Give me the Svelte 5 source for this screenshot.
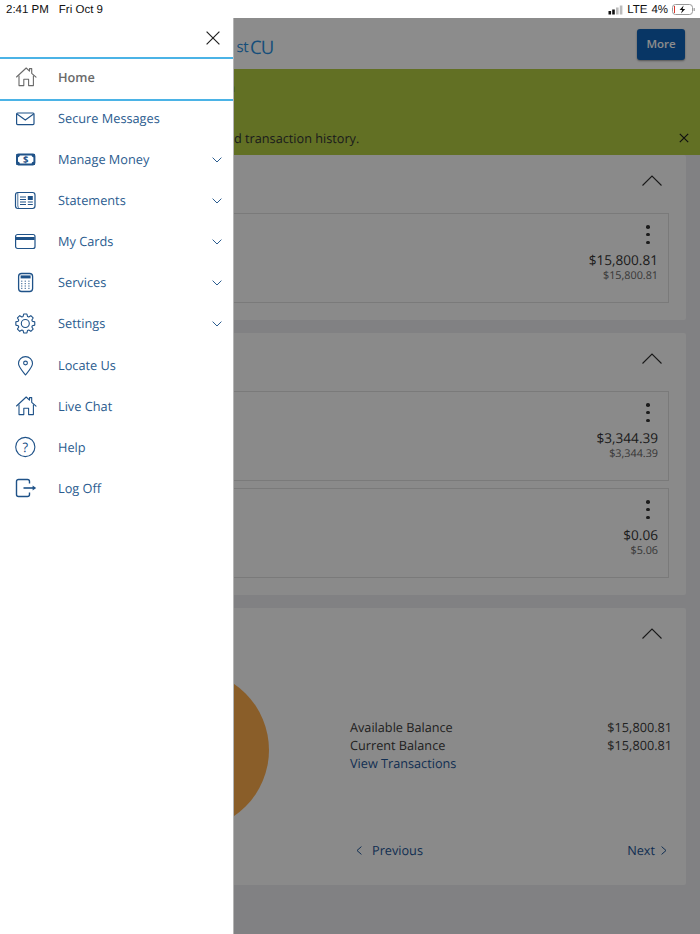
<script>
const menu = [
  { name: 'Secure Messages', icon: 'mail' },
  { name: 'Manage Money', icon: 'money', more: true },
  { name: 'Statements', icon: 'statement', more: true },
  { name: 'My Cards', icon: 'card', more: true },
  { name: 'Services', icon: 'calc', more: true },
  { name: 'Settings', icon: 'gear', more: true },
  { name: 'Locate Us', icon: 'pin' },
  { name: 'Live Chat', icon: 'home' },
  { name: 'Help', icon: 'help' },
  { name: 'Log Off', icon: 'logoff' }
]

const groups = [
  [{ main: '$15,800.81', sub: '$15,800.81' }],
  [{ main: '$3,344.39', sub: '$3,344.39' }, { main: '$0.06', sub: '$5.06' }]
]

// gear outline, 8 teeth
function gearPath() {
  let pts = []
  for (let i = 0; i < 8; i++) {
    let a = (i * Math.PI) / 4
    for (let [r, d] of [[7.4, -0.3], [9.6, -0.17], [9.6, 0.17], [7.4, 0.3]]) {
      pts.push((12.3 + r * Math.cos(a + d)).toFixed(2) + ' ' + (12.5 + r * Math.sin(a + d)).toFixed(2))
    }
  }
  return 'M' + pts.join('L') + 'Z'
}
const gear = gearPath()
const calcDots = [0, 1, 2, 3, 4, 5, 6, 7, 8, 9, 10, 11]
</script>

{#snippet icon(name)}
  <svg class="icon" viewBox="0 0 24 24" width="24" height="24" fill="none" stroke="currentColor" stroke-width="1.1">
    {#if name === 'home'}
      <path d="M3.5 12 13.2 3l3.3 3.1V3.6h2.2v4.7l4.3 3.9" stroke-linejoin="round" stroke-linecap="round" />
      <path d="M6 10.4V20.6h4.8v-6.3h4.8v6.3h4.8V10.4" stroke-linejoin="round" />
    {:else if name === 'mail'}
      <rect x="3.6" y="7" width="17.4" height="11.6" rx="1" stroke-width="1.2" />
      <path d="m4 8 8.3 6L20.6 8" stroke-width="1.1" />
    {:else if name === 'money'}
      <rect x="4" y="7.6" width="17.4" height="9.8" rx="1.4" stroke-width="2" />
      <path d="M3.4 7h3.4v1.6a1.8 1.8 0 0 1-3.4.6ZM22 7h-3.4v1.6a1.8 1.8 0 0 0 3.4.6ZM3.4 18h3.4v-1.6a1.8 1.8 0 0 0-3.4-.6ZM22 18h-3.4v-1.6a1.8 1.8 0 0 1 3.4-.6Z" fill="currentColor" stroke="none" />
      <text class="dollar" x="12.7" y="16.2" text-anchor="middle">$</text>
    {:else if name === 'statement'}
      <rect x="2.5" y="4.5" width="19.5" height="16" rx="2.4" stroke-width="1.2" />
      <path d="M4.8 4.6v13.6c0 .8.5 1.3 1.2 1.3" stroke-width="0.8" />
      <path d="M7 9h6M7 11.5h6M7 14h6M7 16.5h6M14.8 14h5M14.8 16.5h5" stroke-width="1.2" />
      <rect x="14.8" y="8" width="5" height="4" fill="currentColor" stroke="none" />
    {:else if name === 'card'}
      <rect x="2.6" y="5.5" width="19.4" height="14" rx="2" stroke-width="1.2" />
      <rect x="3" y="8" width="18.6" height="3" fill="currentColor" stroke="none" />
    {:else if name === 'calc'}
      <rect x="5.6" y="3.5" width="14" height="18" rx="3" stroke-width="1.3" />
      <rect x="7.6" y="5.4" width="10" height="3" fill="currentColor" stroke="none" />
      {#each calcDots as d}
        <rect x={8 + (d % 3) * 3.6} y={10.6 + Math.floor(d / 3) * 2.4} width="1.4" height="1.2" fill="currentColor" stroke="none" opacity="0.7" />
      {/each}
    {:else if name === 'gear'}
      <path d={gear} stroke-linejoin="round" />
      <circle cx="12.3" cy="12.5" r="4" />
    {:else if name === 'pin'}
      <path d="M12.5 22C9 17.6 5.5 14 5.5 10.6a7 7 0 0 1 14 0c0 3.4-3.5 7-7 11.4Z" stroke-linejoin="round" />
      <circle cx="12.5" cy="10" r="1.9" />
    {:else if name === 'help'}
      <circle cx="12.3" cy="12" r="9.6" stroke-width="1.1" />
      <text class="quest" x="12.3" y="16.6" text-anchor="middle">?</text>
    {:else if name === 'logoff'}
      <path d="M16.5 7.5v-2a2 2 0 0 0-2-2h-9a2 2 0 0 0-2 2v13a2 2 0 0 0 2 2h9a2 2 0 0 0 2-2v-2" stroke-width="1.4" />
      <path d="M10.5 12H20" stroke-width="1.6" />
      <path d="m19.6 9.6 3.6 2.4-3.6 2.4Z" fill="currentColor" stroke="none" />
    {/if}
  </svg>
{/snippet}

{#snippet caretUp()}
  <svg class="caretUp" viewBox="0 0 20 11" width="20" height="11" fill="none" stroke="#2e2e2e" stroke-width="1.1"><path d="M.5 10.5 10 1l9.5 9.5" /></svg>
{/snippet}

<div class="app">
  <div class="status">
    <span>2:41 PM</span>
    <span class="date">Fri Oct 9</span>
    <span class="statusRight">
      <svg class="signal" width="16" height="10" viewBox="0 0 16 10">
        <rect x="0.5" y="6" width="2.6" height="3.5" fill="#111" />
        <rect x="4.2" y="4.5" width="2.6" height="5" fill="#111" />
        <rect x="8" y="2.5" width="2.6" height="7" fill="#bbb" />
        <rect x="11.8" y="0.5" width="2.6" height="9" fill="#bbb" />
      </svg>
      <span>LTE</span>
      <span class="pct">4%</span>
      <svg width="23" height="11" viewBox="0 0 23 11">
        <rect x="0.5" y="0.5" width="20" height="10" rx="3" fill="none" stroke="#999" />
        <rect x="2" y="2" width="1" height="7" fill="#d9352b" />
        <path d="M11.6 1.6 7.6 6h2.6L9 9.6 13.2 5h-2.6Z" fill="#111" />
        <rect x="21.6" y="4" width="1.2" height="3" fill="#999" />
      </svg>
    </span>
  </div>

  <div class="page">
    <header class="top">
      <span class="logo">1<small>st</small>CU</span>
      <button class="moreBtn" type="button">More</button>
    </header>

    <div class="banner">
      <div class="bannerHidden">n</div>
      <div class="bannerLine">
        <span>d transaction history.</span>
        <svg width="10" height="10" viewBox="0 0 10 10" fill="none" stroke="#1d1d1d" stroke-width="1.2"><path d="m.8.8 8.4 8.4M9.2.8.8 9.2" /></svg>
      </div>
    </div>

    <div class="cards">
      {#each groups as group}
        <section class="card">
          <div class="cardHead">{@render caretUp()}</div>
          <div class="boxes">
            {#each group as acct}
              <div class="box">
                <span class="kebab"><i></i><i></i><i></i></span>
                <div class="amount">{acct.main}</div>
                <div class="subAmount">{acct.sub}</div>
              </div>
            {/each}
          </div>
        </section>
      {/each}

      <section class="card">
        <div class="cardHead">{@render caretUp()}</div>
        <div class="detailBody">
          <div class="chart"></div>
          <div class="details">
            <div class="balRow"><span>Available Balance</span><span>$15,800.81</span></div>
            <div class="balRow"><span>Current Balance</span><span>$15,800.81</span></div>
            <div class="link">View Transactions</div>
            <div class="pager">
              <span class="link pagerItem prev">
                <svg width="6" height="9" viewBox="0 0 6 9" fill="none" stroke="currentColor" stroke-width="1"><path d="M5.4.6 1 4.5l4.4 3.9" /></svg>
                Previous
              </span>
              <span class="link pagerItem">
                Next
                <svg width="6" height="9" viewBox="0 0 6 9" fill="none" stroke="currentColor" stroke-width="1"><path d="M.6.6 5 4.5.6 8.4" /></svg>
              </span>
            </div>
          </div>
        </div>
      </section>
    </div>
  </div>

  <div class="scrim"></div>

  <nav class="drawer">
    <div class="drawerTop">
      <svg width="14" height="14" viewBox="0 0 14 14" fill="none" stroke="#222" stroke-width="1.2"><path d="m.6.6 12.8 12.8M13.4.6.6 13.4" /></svg>
    </div>
    <div class="homeRow">
      {@render icon('home')}
      <span>Home</span>
    </div>
    {#each menu as item}
      <div class="row">
        {@render icon(item.icon)}
        <span>{item.name}</span>
        {#if item.more}
          <svg class="caret" width="10" height="6" viewBox="0 0 10 6" fill="none" stroke="currentColor" stroke-width="1"><path d="m.6.6 4.4 4.4L9.4.6" /></svg>
        {/if}
      </div>
    {/each}
  </nav>
</div>

<style>
  :global(body) {
    margin: 0;
    background: #fff;
  }

  .app {
    position: relative;
    height: 934px;
    overflow: hidden;
    font-family: "Open Sans", "Noto Sans", sans-serif;
    text-rendering: geometricPrecision;
  }

  .status {
    height: 18px;
    box-sizing: border-box;
    display: flex;
    align-items: center;
    padding: 1px 5px 0 6px;
    font-family: "Liberation Sans", sans-serif;
    font-size: 11.5px;
    color: #111;
    background: #fff;
  }

  .date {
    margin-left: 10px;
  }

  .statusRight {
    margin-left: auto;
    display: flex;
    align-items: center;
    gap: 4px;
  }

  .pct {
    margin-left: 0;
  }

  .signal {
    margin-right: -1px;
  }

  .page {
    height: 916px;
    background: #ebebee;
  }

  .top {
    height: 51px;
    box-sizing: border-box;
    display: flex;
    justify-content: space-between;
    align-items: flex-start;
    padding: 11px 15px 0 227px;
    background: #fff;
  }

  .logo {
    margin-top: 5px;
    font-size: 18.5px;
    font-weight: 500;
    line-height: 28px;
    letter-spacing: -1px;
    color: #2a8fe0;
  }

  .logo small {
    position: relative;
    top: -2px;
    font-size: 15px;
    letter-spacing: -0.5px;
    margin-right: 2px;
  }

  .moreBtn {
    width: 48px;
    height: 31px;
    border: 0;
    padding: 0 0 2px;
    border-radius: 3px;
    background: #0f63b8;
    box-shadow: 0 1px 2px rgba(0, 0, 0, 0.4);
    color: #fff;
    font-family: inherit;
    font-size: 11.5px;
    font-weight: 600;
  }

  .banner {
    height: 86px;
    box-sizing: border-box;
    background: #b2cc43;
    color: #333;
    font-size: 12.7px;
  }

  .bannerHidden {
    width: 235px;
    height: 59px;
    box-sizing: border-box;
    padding-top: 8px;
    text-align: right;
    line-height: 20px;
  }

  .bannerLine {
    display: flex;
    align-items: center;
    justify-content: space-between;
    padding: 0 11px 0 234px;
    line-height: 20px;
  }

  .cards {
    display: flex;
    flex-direction: column;
    gap: 13px;
    padding: 0 14px;
  }

  .card {
    background: #fbfbfb;
    border-radius: 2px;
    padding: 0 17px 17px 0;
  }

  .cardHead {
    height: 58px;
    display: flex;
    justify-content: flex-end;
  }

  .caretUp {
    margin: 20px 7px 0 0;
  }

  .boxes {
    display: flex;
    flex-direction: column;
    gap: 7px;
  }

  .box {
    height: 90px;
    box-sizing: border-box;
    border: 1px solid #dedede;
    padding: 11px 10px 0 0;
    display: flex;
    flex-direction: column;
    align-items: flex-end;
    color: #333;
  }

  .kebab {
    display: flex;
    flex-direction: column;
    gap: 4.2px;
    margin-right: 8px;
  }

  .kebab i {
    width: 3.6px;
    height: 3.6px;
    border-radius: 50%;
    background: #333;
  }

  .amount {
    margin-top: 7px;
    font-size: 13.6px;
    line-height: 18px;
    font-weight: 500;
  }

  .subAmount {
    font-size: 10.8px;
    line-height: 14px;
    color: #666;
  }

  .detailBody {
    display: flex;
    align-items: flex-start;
    padding-left: 94.5px;
    margin-right: -3px;
    padding-bottom: 9px;
  }

  .chart {
    flex: none;
    width: 160px;
    height: 160px;
    margin-top: 4px;
    border-radius: 50%;
    background: #fbab4c;
  }

  .details {
    flex: 1;
    margin: 52px 0 0 81.5px;
    font-size: 12.7px;
    line-height: 18px;
    color: #3c3c3c;
  }

  .balRow {
    display: flex;
    justify-content: space-between;
  }

  .link {
    color: #1e5596;
  }

  .pager {
    display: flex;
    justify-content: space-between;
    margin-top: 69px;
    padding: 0 5px 0 6px;
  }

  .pagerItem {
    display: flex;
    align-items: center;
    gap: 6px;
  }

  .prev {
    gap: 10px;
  }

  .scrim {
    position: absolute;
    inset: 18px 0 0 0;
    background: rgba(0, 0, 0, 0.45);
  }

  .drawer {
    position: absolute;
    top: 18px;
    bottom: 0;
    left: 0;
    width: 233px;
    background: #fff;
    border-right: 1px solid #b4b4b4;
    color: #2b5c8f;
    font-size: 12.75px;
  }

  .drawerTop {
    height: 39px;
    display: flex;
    justify-content: flex-end;
    padding: 13px 13px 0 0;
    box-sizing: border-box;
  }

  .homeRow {
    height: 44px;
    box-sizing: border-box;
    display: flex;
    align-items: center;
    padding: 0 0 4px 13px;
    border-top: 2px solid #4bb3e6;
    border-bottom: 2px solid #4bb3e6;
    color: #6a6a6a;
    font-weight: 600;
  }

  .row {
    height: 34px;
    margin-bottom: 7.1px;
    display: flex;
    align-items: center;
    padding: 0 11px 0 13px;
  }

  .icon {
    flex: none;
    margin-right: 21px;
  }

  .row .icon {
    color: #1f5288;
  }

  .caret {
    margin-left: auto;
    margin-top: 1px;
  }

  .dollar {
    font: 700 9.5px "Open Sans", sans-serif;
    fill: currentColor;
    stroke: none;
  }

  .quest {
    font: 500 13px "Open Sans", sans-serif;
    fill: currentColor;
    stroke: none;
  }
</style>
